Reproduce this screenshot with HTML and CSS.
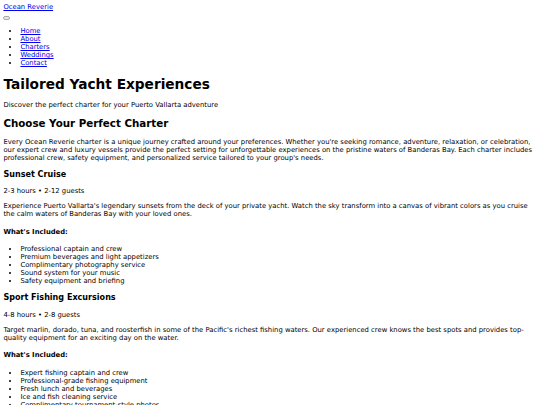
FILE: index.html
```html
<!DOCTYPE html>
<html lang="en">
<head>
  <meta charset="UTF-8">
  <meta name="viewport" content="width=device-width, initial-scale=1">
  <title>Ocean Reverie - Charters</title>
  <link rel="stylesheet" href="styles.css">
</head>
<body>

  <header>
    <div class="logo"><a href="#">Ocean Reverie</a></div>
    <button class="menu-toggle" aria-label="Menu"></button>
    <ul class="nav">
      <li><a href="#">Home</a></li>
      <li><a href="#">About</a></li>
      <li><a href="#">Charters</a></li>
      <li><a href="#">Weddings</a></li>
      <li><a href="#">Contact</a></li>
    </ul>
  </header>

  <main>
    <h1>Tailored Yacht Experiences</h1>
    <p>Discover the perfect charter for your Puerto Vallarta adventure</p>

    <h2>Choose Your Perfect Charter</h2>
    <p>Every Ocean Reverie charter is a unique journey crafted around your preferences. Whether you're seeking romance, adventure, relaxation, or celebration, our expert crew and luxury vessels provide the perfect setting for unforgettable experiences on the pristine waters of Banderas Bay. Each charter includes professional crew, safety equipment, and personalized service tailored to your group's needs.</p>

    <h3>Sunset Cruise</h3>
    <p>2-3 hours • 2-12 guests</p>
    <p>Experience Puerto Vallarta's legendary sunsets from the deck of your private yacht. Watch the sky transform into a canvas of vibrant colors as you cruise the calm waters of Banderas Bay with your loved ones.</p>
    <h4>What's Included:</h4>
    <ul>
      <li>Professional captain and crew</li>
      <li>Premium beverages and light appetizers</li>
      <li>Complimentary photography service</li>
      <li>Sound system for your music</li>
      <li>Safety equipment and briefing</li>
    </ul>

    <h3>Sport Fishing Excursions</h3>
    <p>4-8 hours • 2-8 guests</p>
    <p>Target marlin, dorado, tuna, and roosterfish in some of the Pacific's richest fishing waters. Our experienced crew knows the best spots and provides top-quality equipment for an exciting day on the water.</p>
    <h4>What's Included:</h4>
    <ul>
      <li>Expert fishing captain and crew</li>
      <li>Professional-grade fishing equipment</li>
      <li>Fresh lunch and beverages</li>
      <li>Ice and fish cleaning service</li>
      <li>Complimentary tournament-style photos</li>
    </ul>
  </main>

</body>
</html>
```

FILE: styles.css
```css
/* base */
body {
  margin: 3.4px;
  font-family: "DejaVu Sans", Verdana, sans-serif;
  font-size: 6.82px;
  color: #000;
  background: #fff;
}
a { color: #00e; }

/* header */
.menu-toggle {
  display: block;
  width: 7px;
  height: 4px;
  padding: 0;
  margin: 5px 0 1px;
  border: 1px solid #aaa;
  border-radius: 2px;
  background: #e9e9ed;
}
.nav {
  margin: 7px 0;
  padding-left: 17px;
}

/* content */
h1 { font-size: 13.7px; margin: 8.8px 0; }
h2 { font-size: 10.3px; margin: 8.4px 0; }
h3 { font-size: 8.05px; margin: 8.2px 0; }
h4 { font-size: 6.82px; margin: 9.4px 0; }
p { margin: 7.3px 0; }
main ul {
  margin: 7.3px 0;
  padding-left: 17px;
}
```
